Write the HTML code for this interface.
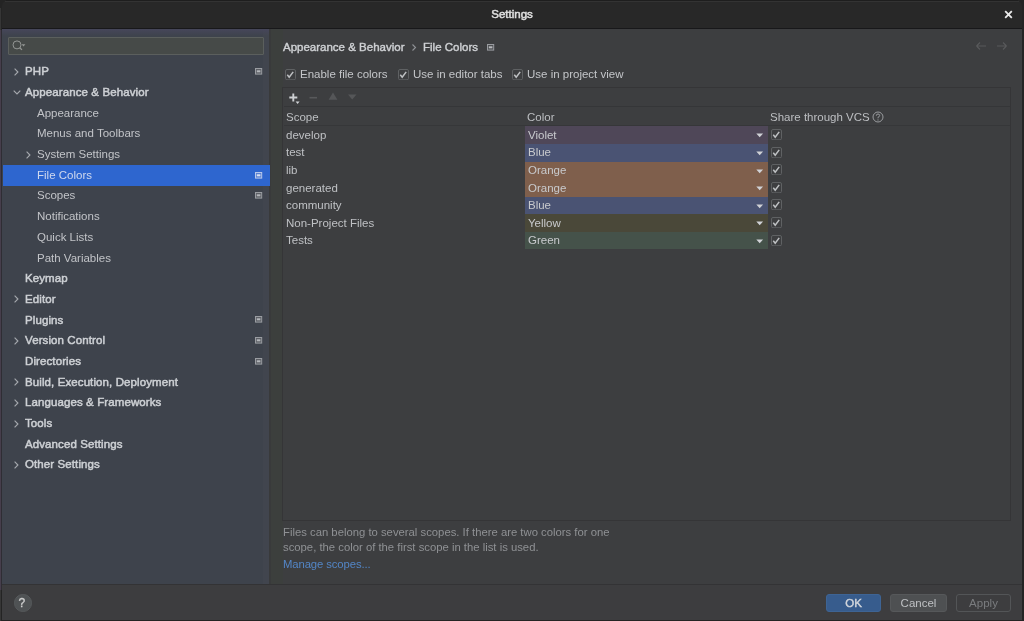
<!DOCTYPE html>
<html><head><meta charset="utf-8">
<style>
*{box-sizing:border-box;margin:0;padding:0}
html,body{width:1024px;height:621px;overflow:hidden;background:#242424;font-family:"Liberation Sans",sans-serif;}
.abs{position:absolute}
.t{position:absolute;white-space:nowrap;line-height:normal;will-change:transform}
.cb{width:11px;height:11px}
.cb svg{display:block}
</style></head>
<body>
<div class="abs" style="left:2px;top:0;width:1020px;height:28px;background:#282828;border-radius:6px 6px 0 0"></div>
<div class="abs" style="left:6px;top:0;width:1012px;height:1px;background:#1e1e1e"></div>
<div class="abs" style="left:5px;top:1px;width:1014px;height:1px;background:#333333"></div>
<div class="abs" style="left:0;top:8px;width:1px;height:613px;background:#363636"></div>
<div class="abs" style="left:0;top:30px;width:2px;height:560px;background:linear-gradient(90deg,#463e4c 0,#463e4c 50%,#2f2d34 50%)"></div>
<div class="abs" style="left:2px;top:28px;width:1020px;height:1px;background:#18181a"></div>
<div class="t" style="left:0px;top:8.49px;color:#e0e0e0;font-size:11.5px;-webkit-text-stroke:0.5px #e0e0e0;width:1024px;text-align:center;">Settings</div>
<svg class="abs" style="left:1003px;top:9px" width="11" height="11"><path d="M2.2 2.2 L8.8 8.8 M8.8 2.2 L2.2 8.8" stroke="#ececec" stroke-width="1.8"/></svg>

<div class="abs" style="left:2px;top:29px;width:268px;height:556px;background:#3e434c"></div>
<div class="abs" style="left:263px;top:29px;width:6px;height:556px;background:#41454e"></div>
<div class="abs" style="left:2px;top:29px;width:267px;height:7px;background:linear-gradient(180deg,#46465a 0%,rgba(62,67,76,0) 100%)"></div>
<div class="abs" style="left:269px;top:29px;width:2px;height:556px;background:#393a3b"></div>
<div class="abs" style="left:271px;top:29px;width:751px;height:556px;background:#3d3e40"></div>
<div class="abs" style="left:271px;top:29px;width:12px;height:556px;background:#3c3f3d"></div>
<div class="abs" style="left:2px;top:584px;width:1020px;height:35.5px;background:#3d3d3f;border-top:1px solid #333335"></div>

<!-- search -->
<div class="abs" style="left:8px;top:37px;width:255.5px;height:17.5px;border:1px solid #5b5f5d;background:#464a48;border-radius:1px"></div>
<svg class="abs" style="left:11px;top:39px" width="20" height="14"><circle cx="6" cy="5.9" r="4" stroke="#939694" stroke-width="1" fill="none"/><path d="M8.8 8.7 L11 10.9" stroke="#939694" stroke-width="1.3"/><path d="M10.6 5.3 L14.4 5.3 L12.5 7.6Z" fill="#939694"/></svg>

<div class="t" style="left:25px;top:65.39px;color:#cdd0d4;font-size:11.5px;letter-spacing:0.1px;-webkit-text-stroke:0.5px #cdd0d4;">PHP</div><svg class="abs" style="left:12px;top:67.00px" width="8" height="10"><path d="M2.6 1.7 L5.9 5 L2.6 8.3" stroke="#a6a9ae" stroke-width="1.15" fill="none"/></svg><svg class="abs" style="left:254.8px;top:68.30px" width="8" height="7"><rect x="0.5" y="0.5" width="6.2" height="5.6" fill="#5d6066" stroke="#9a9da2" stroke-width="1"/><rect x="1.8" y="2.3" width="3.6" height="2" fill="#b4b7bb"/></svg><div class="t" style="left:25px;top:86.07px;color:#cdd0d4;font-size:11.5px;letter-spacing:0.1px;-webkit-text-stroke:0.5px #cdd0d4;">Appearance &amp; Behavior</div><svg class="abs" style="left:11.5px;top:88.08px" width="10" height="8"><path d="M1.7 2.6 L5 5.9 L8.3 2.6" stroke="#a6a9ae" stroke-width="1.15" fill="none"/></svg><div class="t" style="left:37px;top:106.75px;color:#c2c4c8;font-size:11.5px;">Appearance</div><div class="t" style="left:37px;top:127.43px;color:#c2c4c8;font-size:11.5px;">Menus and Toolbars</div><div class="t" style="left:37px;top:148.11px;color:#c2c4c8;font-size:11.5px;">System Settings</div><svg class="abs" style="left:24px;top:149.72px" width="8" height="10"><path d="M2.6 1.7 L5.9 5 L2.6 8.3" stroke="#a6a9ae" stroke-width="1.15" fill="none"/></svg><div class="abs" style="left:3px;top:165px;width:266.5px;height:21px;background:#2e66cf"></div><div class="t" style="left:37px;top:168.79px;color:#d0d9ee;font-size:11.5px;">File Colors</div><svg class="abs" style="left:254.8px;top:171.70px" width="8" height="7"><rect x="0.5" y="0.5" width="6.2" height="5.6" fill="#5a80d0" stroke="#b8c8ea" stroke-width="1"/><rect x="1.8" y="2.3" width="3.6" height="2" fill="#dce4f4"/></svg><div class="t" style="left:37px;top:189.47px;color:#c2c4c8;font-size:11.5px;">Scopes</div><svg class="abs" style="left:254.8px;top:192.38px" width="8" height="7"><rect x="0.5" y="0.5" width="6.2" height="5.6" fill="#5d6066" stroke="#9a9da2" stroke-width="1"/><rect x="1.8" y="2.3" width="3.6" height="2" fill="#b4b7bb"/></svg><div class="t" style="left:37px;top:210.15px;color:#c2c4c8;font-size:11.5px;">Notifications</div><div class="t" style="left:37px;top:230.83px;color:#c2c4c8;font-size:11.5px;">Quick Lists</div><div class="t" style="left:37px;top:251.51px;color:#c2c4c8;font-size:11.5px;">Path Variables</div><div class="t" style="left:25px;top:272.19px;color:#cdd0d4;font-size:11.5px;letter-spacing:0.1px;-webkit-text-stroke:0.5px #cdd0d4;">Keymap</div><div class="t" style="left:25px;top:292.87px;color:#cdd0d4;font-size:11.5px;letter-spacing:0.1px;-webkit-text-stroke:0.5px #cdd0d4;">Editor</div><svg class="abs" style="left:12px;top:294.48px" width="8" height="10"><path d="M2.6 1.7 L5.9 5 L2.6 8.3" stroke="#a6a9ae" stroke-width="1.15" fill="none"/></svg><div class="t" style="left:25px;top:313.55px;color:#cdd0d4;font-size:11.5px;letter-spacing:0.1px;-webkit-text-stroke:0.5px #cdd0d4;">Plugins</div><svg class="abs" style="left:254.8px;top:316.46px" width="8" height="7"><rect x="0.5" y="0.5" width="6.2" height="5.6" fill="#5d6066" stroke="#9a9da2" stroke-width="1"/><rect x="1.8" y="2.3" width="3.6" height="2" fill="#b4b7bb"/></svg><div class="t" style="left:25px;top:334.23px;color:#cdd0d4;font-size:11.5px;letter-spacing:0.1px;-webkit-text-stroke:0.5px #cdd0d4;">Version Control</div><svg class="abs" style="left:12px;top:335.84px" width="8" height="10"><path d="M2.6 1.7 L5.9 5 L2.6 8.3" stroke="#a6a9ae" stroke-width="1.15" fill="none"/></svg><svg class="abs" style="left:254.8px;top:337.14px" width="8" height="7"><rect x="0.5" y="0.5" width="6.2" height="5.6" fill="#5d6066" stroke="#9a9da2" stroke-width="1"/><rect x="1.8" y="2.3" width="3.6" height="2" fill="#b4b7bb"/></svg><div class="t" style="left:25px;top:354.91px;color:#cdd0d4;font-size:11.5px;letter-spacing:0.1px;-webkit-text-stroke:0.5px #cdd0d4;">Directories</div><svg class="abs" style="left:254.8px;top:357.82px" width="8" height="7"><rect x="0.5" y="0.5" width="6.2" height="5.6" fill="#5d6066" stroke="#9a9da2" stroke-width="1"/><rect x="1.8" y="2.3" width="3.6" height="2" fill="#b4b7bb"/></svg><div class="t" style="left:25px;top:375.59px;color:#cdd0d4;font-size:11.5px;letter-spacing:0.1px;-webkit-text-stroke:0.5px #cdd0d4;">Build, Execution, Deployment</div><svg class="abs" style="left:12px;top:377.20px" width="8" height="10"><path d="M2.6 1.7 L5.9 5 L2.6 8.3" stroke="#a6a9ae" stroke-width="1.15" fill="none"/></svg><div class="t" style="left:25px;top:396.27px;color:#cdd0d4;font-size:11.5px;letter-spacing:0.1px;-webkit-text-stroke:0.5px #cdd0d4;">Languages &amp; Frameworks</div><svg class="abs" style="left:12px;top:397.88px" width="8" height="10"><path d="M2.6 1.7 L5.9 5 L2.6 8.3" stroke="#a6a9ae" stroke-width="1.15" fill="none"/></svg><div class="t" style="left:25px;top:416.95px;color:#cdd0d4;font-size:11.5px;letter-spacing:0.1px;-webkit-text-stroke:0.5px #cdd0d4;">Tools</div><svg class="abs" style="left:12px;top:418.56px" width="8" height="10"><path d="M2.6 1.7 L5.9 5 L2.6 8.3" stroke="#a6a9ae" stroke-width="1.15" fill="none"/></svg><div class="t" style="left:25px;top:437.63px;color:#cdd0d4;font-size:11.5px;letter-spacing:0.1px;-webkit-text-stroke:0.5px #cdd0d4;">Advanced Settings</div><div class="t" style="left:25px;top:458.31px;color:#cdd0d4;font-size:11.5px;letter-spacing:0.1px;-webkit-text-stroke:0.5px #cdd0d4;">Other Settings</div><svg class="abs" style="left:12px;top:459.92px" width="8" height="10"><path d="M2.6 1.7 L5.9 5 L2.6 8.3" stroke="#a6a9ae" stroke-width="1.15" fill="none"/></svg>

<!-- breadcrumb -->
<div class="t" style="left:283px;top:40.99px;color:#cfd1d4;font-size:11.5px;-webkit-text-stroke:0.4px #cfd1d4;">Appearance &amp; Behavior</div>
<svg class="abs" style="left:410px;top:42.5px" width="8" height="10"><path d="M2.5 1.5 L5.5 4.5 L2.5 7.5" stroke="#909296" stroke-width="1.1" fill="none"/></svg>
<div class="t" style="left:423px;top:40.99px;color:#cfd1d4;font-size:11.5px;-webkit-text-stroke:0.4px #cfd1d4;">File Colors</div>
<svg class="abs" style="left:487px;top:44.2px" width="8" height="7"><rect x="0.5" y="0.5" width="6.2" height="5.6" fill="#4d4f52" stroke="#9a9ca0" stroke-width="1"/><rect x="1.8" y="2.3" width="3.6" height="2" fill="#b8babd"/></svg>
<svg class="abs" style="left:975px;top:41px" width="34" height="10"><path d="M1.5 5 L11 5 M1.5 5 L5 1.5 M1.5 5 L5 8.5" stroke="#58595b" stroke-width="1.1" fill="none"/><path d="M22 5 L31.5 5 M31.5 5 L28 1.5 M31.5 5 L28 8.5" stroke="#58595b" stroke-width="1.1" fill="none"/></svg>

<!-- checkboxes -->
<div class="abs cb" style="left:285px;top:68.5px"><svg width="11" height="11"><rect x="0.5" y="0.5" width="10" height="10.3" rx="1.5" fill="none" stroke="#5f6163" stroke-width="1"/><path d="M2.3 5.8 L4.2 8.2 L8.2 2.9" stroke="#bfc1c3" stroke-width="1.5" fill="none"/></svg></div>
<div class="t" style="left:300.3px;top:68.49px;color:#c4c6c9;font-size:11.5px;">Enable file colors</div>
<div class="abs cb" style="left:397.5px;top:68.5px"><svg width="11" height="11"><rect x="0.5" y="0.5" width="10" height="10.3" rx="1.5" fill="none" stroke="#5f6163" stroke-width="1"/><path d="M2.3 5.8 L4.2 8.2 L8.2 2.9" stroke="#bfc1c3" stroke-width="1.5" fill="none"/></svg></div>
<div class="t" style="left:412.8px;top:68.49px;color:#c4c6c9;font-size:11.5px;">Use in editor tabs</div>
<div class="abs cb" style="left:512px;top:68.5px"><svg width="11" height="11"><rect x="0.5" y="0.5" width="10" height="10.3" rx="1.5" fill="none" stroke="#5f6163" stroke-width="1"/><path d="M2.3 5.8 L4.2 8.2 L8.2 2.9" stroke="#bfc1c3" stroke-width="1.5" fill="none"/></svg></div>
<div class="t" style="left:527.3px;top:68.49px;color:#c4c6c9;font-size:11.5px;">Use in project view</div>

<!-- table -->
<div class="abs" style="left:282px;top:87px;width:729px;height:434px;border:1px solid #353537"></div>
<div class="abs" style="left:284px;top:106px;width:726px;height:1px;background:#353638"></div>
<div class="abs" style="left:284px;top:125px;width:726px;height:1px;background:#363739"></div>
<svg class="abs" style="left:286px;top:90px" width="80" height="16"><path d="M3.3 7.5 L11.3 7.5 M7.3 3.5 L7.3 11.5" stroke="#cdcfd2" stroke-width="1.9"/><path d="M9.6 11.6 L13.6 11.6 L11.6 14.1 Z" fill="#d0d2d5"/><path d="M23.5 7.7 L31 7.7" stroke="#58595b" stroke-width="1.6"/><path d="M42.6 9.8 L51.4 9.8 L47 2.5 Z" fill="#555658"/><path d="M62 4.5 L70.5 4.5 L66.2 9.6 Z" fill="#555658"/></svg>
<div class="t" style="left:285.5px;top:110.79px;color:#bdbfc2;font-size:11.5px;">Scope</div>
<div class="t" style="left:527.3px;top:110.79px;color:#bdbfc2;font-size:11.5px;">Color</div>
<div class="t" style="left:770px;top:110.79px;color:#bdbfc2;font-size:11.5px;">Share through VCS</div>
<svg class="abs" style="left:872px;top:111px" width="12" height="12"><circle cx="6" cy="6" r="5" stroke="#9a9c9f" stroke-width="1" fill="none"/><path d="M4.3 4.7 Q4.3 3 6 3 Q7.7 3 7.7 4.6 Q7.7 5.6 6 6.3 L6 7.3" stroke="#9a9c9f" stroke-width="1" fill="none"/><circle cx="6" cy="8.9" r="0.6" fill="#9a9c9f"/></svg>
<div class="abs" style="left:524.5px;top:126.40px;width:243.5px;height:17.60px;background:#4f4758"></div><div class="t" style="left:285.5px;top:128.89px;color:#bfc1c4;font-size:11.5px;">develop</div><div class="t" style="left:527.5px;top:128.89px;color:#c8cacd;font-size:11.5px;">Violet</div><svg class="abs" style="left:755px;top:131.40px" width="10" height="8"><path d="M1.3 2.4 L8.1 2.4 L4.7 6.2 Z" fill="#d0d2d6"/></svg><div class="abs cb" style="left:771px;top:129.20px"><svg width="11" height="11"><rect x="0.5" y="0.5" width="10" height="10.3" rx="1.5" fill="none" stroke="#5f6163" stroke-width="1"/><path d="M2.3 5.8 L4.2 8.2 L8.2 2.9" stroke="#bfc1c3" stroke-width="1.5" fill="none"/></svg></div><div class="abs" style="left:524.5px;top:143.95px;width:243.5px;height:17.60px;background:#4a5373"></div><div class="t" style="left:285.5px;top:146.44px;color:#bfc1c4;font-size:11.5px;">test</div><div class="t" style="left:527.5px;top:146.44px;color:#c8cacd;font-size:11.5px;">Blue</div><svg class="abs" style="left:755px;top:148.95px" width="10" height="8"><path d="M1.3 2.4 L8.1 2.4 L4.7 6.2 Z" fill="#d0d2d6"/></svg><div class="abs cb" style="left:771px;top:146.75px"><svg width="11" height="11"><rect x="0.5" y="0.5" width="10" height="10.3" rx="1.5" fill="none" stroke="#5f6163" stroke-width="1"/><path d="M2.3 5.8 L4.2 8.2 L8.2 2.9" stroke="#bfc1c3" stroke-width="1.5" fill="none"/></svg></div><div class="abs" style="left:524.5px;top:161.50px;width:243.5px;height:17.60px;background:#7f5f4c"></div><div class="t" style="left:285.5px;top:163.99px;color:#bfc1c4;font-size:11.5px;">lib</div><div class="t" style="left:527.5px;top:163.99px;color:#c8cacd;font-size:11.5px;">Orange</div><svg class="abs" style="left:755px;top:166.50px" width="10" height="8"><path d="M1.3 2.4 L8.1 2.4 L4.7 6.2 Z" fill="#d0d2d6"/></svg><div class="abs cb" style="left:771px;top:164.30px"><svg width="11" height="11"><rect x="0.5" y="0.5" width="10" height="10.3" rx="1.5" fill="none" stroke="#5f6163" stroke-width="1"/><path d="M2.3 5.8 L4.2 8.2 L8.2 2.9" stroke="#bfc1c3" stroke-width="1.5" fill="none"/></svg></div><div class="abs" style="left:524.5px;top:179.05px;width:243.5px;height:17.60px;background:#7f5f4c"></div><div class="t" style="left:285.5px;top:181.54px;color:#bfc1c4;font-size:11.5px;">generated</div><div class="t" style="left:527.5px;top:181.54px;color:#c8cacd;font-size:11.5px;">Orange</div><svg class="abs" style="left:755px;top:184.05px" width="10" height="8"><path d="M1.3 2.4 L8.1 2.4 L4.7 6.2 Z" fill="#d0d2d6"/></svg><div class="abs cb" style="left:771px;top:181.85px"><svg width="11" height="11"><rect x="0.5" y="0.5" width="10" height="10.3" rx="1.5" fill="none" stroke="#5f6163" stroke-width="1"/><path d="M2.3 5.8 L4.2 8.2 L8.2 2.9" stroke="#bfc1c3" stroke-width="1.5" fill="none"/></svg></div><div class="abs" style="left:524.5px;top:196.60px;width:243.5px;height:17.60px;background:#4a5373"></div><div class="t" style="left:285.5px;top:199.09px;color:#bfc1c4;font-size:11.5px;">community</div><div class="t" style="left:527.5px;top:199.09px;color:#c8cacd;font-size:11.5px;">Blue</div><svg class="abs" style="left:755px;top:201.60px" width="10" height="8"><path d="M1.3 2.4 L8.1 2.4 L4.7 6.2 Z" fill="#d0d2d6"/></svg><div class="abs cb" style="left:771px;top:199.40px"><svg width="11" height="11"><rect x="0.5" y="0.5" width="10" height="10.3" rx="1.5" fill="none" stroke="#5f6163" stroke-width="1"/><path d="M2.3 5.8 L4.2 8.2 L8.2 2.9" stroke="#bfc1c3" stroke-width="1.5" fill="none"/></svg></div><div class="abs" style="left:524.5px;top:214.15px;width:243.5px;height:17.60px;background:#4a4839"></div><div class="t" style="left:285.5px;top:216.64px;color:#bfc1c4;font-size:11.5px;">Non-Project Files</div><div class="t" style="left:527.5px;top:216.64px;color:#c8cacd;font-size:11.5px;">Yellow</div><svg class="abs" style="left:755px;top:219.15px" width="10" height="8"><path d="M1.3 2.4 L8.1 2.4 L4.7 6.2 Z" fill="#d0d2d6"/></svg><div class="abs cb" style="left:771px;top:216.95px"><svg width="11" height="11"><rect x="0.5" y="0.5" width="10" height="10.3" rx="1.5" fill="none" stroke="#5f6163" stroke-width="1"/><path d="M2.3 5.8 L4.2 8.2 L8.2 2.9" stroke="#bfc1c3" stroke-width="1.5" fill="none"/></svg></div><div class="abs" style="left:524.5px;top:231.70px;width:243.5px;height:17.60px;background:#45524a"></div><div class="t" style="left:285.5px;top:234.19px;color:#bfc1c4;font-size:11.5px;">Tests</div><div class="t" style="left:527.5px;top:234.19px;color:#c8cacd;font-size:11.5px;">Green</div><svg class="abs" style="left:755px;top:236.70px" width="10" height="8"><path d="M1.3 2.4 L8.1 2.4 L4.7 6.2 Z" fill="#d0d2d6"/></svg><div class="abs cb" style="left:771px;top:234.50px"><svg width="11" height="11"><rect x="0.5" y="0.5" width="10" height="10.3" rx="1.5" fill="none" stroke="#5f6163" stroke-width="1"/><path d="M2.3 5.8 L4.2 8.2 L8.2 2.9" stroke="#bfc1c3" stroke-width="1.5" fill="none"/></svg></div>

<!-- hint -->
<div class="t" style="left:282.5px;top:525.97px;color:#8f9194;font-size:11.3px;">Files can belong to several scopes. If there are two colors for one</div>
<div class="t" style="left:282.5px;top:540.97px;color:#8f9194;font-size:11.3px;">scope, the color of the first scope in the list is used.</div>
<div class="t" style="left:283px;top:558.07px;color:#5386c6;font-size:11.3px;letter-spacing:-0.1px;">Manage scopes...</div>

<!-- bottom -->
<div class="abs" style="left:14px;top:594px;width:17.5px;height:17.5px;border-radius:50%;background:#4f5254;border:1px solid #56595b"></div>
<div class="t" style="left:13.2px;top:596.34px;color:#d0d0d0;font-size:12px;-webkit-text-stroke:0.3px #d0d0d0;width:17.5px;text-align:center;">?</div>
<div class="abs" style="left:826px;top:593.5px;width:55px;height:18.5px;background:#375c8d;border-radius:3px;border:1px solid #3e6494"></div>
<div class="t" style="left:826px;top:596.59px;color:#d2d6dc;font-size:11.5px;-webkit-text-stroke:0.4px #d2d6dc;width:55px;text-align:center;">OK</div>
<div class="abs" style="left:890px;top:593.5px;width:57px;height:18.5px;background:#4e5052;border-radius:3px;border:1px solid #56585a"></div>
<div class="t" style="left:890px;top:596.59px;color:#bec0c3;font-size:11.5px;width:57px;text-align:center;">Cancel</div>
<div class="abs" style="left:956px;top:593.5px;width:55px;height:18.5px;border-radius:3px;border:1px solid #535557"></div>
<div class="t" style="left:956px;top:596.59px;color:#7a7c7f;font-size:11.5px;width:55px;text-align:center;">Apply</div>
</body></html>
